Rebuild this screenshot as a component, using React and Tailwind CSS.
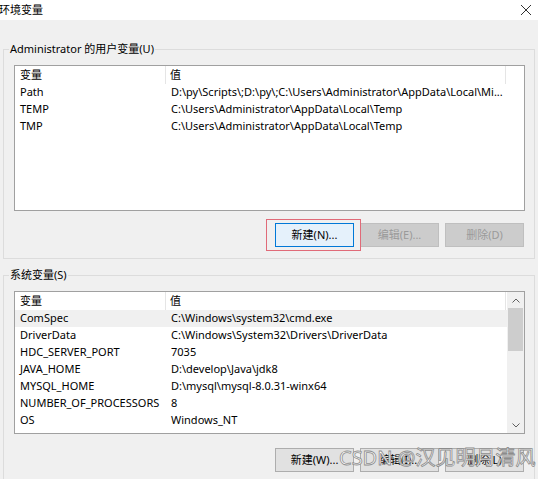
import React from "react";

const userVars = [
  ["Path", "D:\\py\\Scripts\\;D:\\py\\;C:\\Users\\Administrator\\AppData\\Local\\Mi..."],
  ["TEMP", "C:\\Users\\Administrator\\AppData\\Local\\Temp"],
  ["TMP", "C:\\Users\\Administrator\\AppData\\Local\\Temp"],
];

const sysVars = [
  ["ComSpec", "C:\\Windows\\system32\\cmd.exe"],
  ["DriverData", "C:\\Windows\\System32\\Drivers\\DriverData"],
  ["HDC_SERVER_PORT", "7035"],
  ["JAVA_HOME", "D:\\develop\\Java\\jdk8"],
  ["MYSQL_HOME", "D:\\mysql\\mysql-8.0.31-winx64"],
  ["NUMBER_OF_PROCESSORS", "8"],
  ["OS", "Windows_NT"],
  ["Path", "C:\\Program Files\\Common Files\\Oracle\\Java\\javapath;C:\\P..."],
];

function Header() {
  return (
    <div className="flex h-[18px] items-center shrink-0">
      <div className="w-[151px] pl-[5px] border-r border-[#e5e5e5] h-full flex items-center">变量</div>
      <div className="w-[340px] pl-[4px] border-r border-[#e5e5e5] h-full flex items-center">值</div>
    </div>
  );
}

function Row({ name, value, selected }) {
  return (
    <div className={"flex h-[17px] items-center shrink-0 whitespace-nowrap " + (selected ? "bg-[#f0f0f0]" : "")}>
      <div className="w-[152px] pl-[5px]">{name}</div>
      <div className="pl-[4px]">{value}</div>
    </div>
  );
}

function Btn({ children, disabled, primary }) {
  let cls = "w-[79px] h-[24px] flex items-center justify-center border ";
  if (disabled) cls += "bg-[#cccccc] border-[#bfbfbf] text-[#9a9a9a]";
  else if (primary) cls += "bg-[#e5f1fb] border-[#0078d7]";
  else cls += "bg-[#e1e1e1] border-[#adadad]";
  return <div className={cls}>{children}</div>;
}

export default function App() {
  return (
    <div
      className="w-[538px] h-[479px] bg-[#f0f0f0] overflow-hidden text-[11px] text-black relative"
      style={{ fontFamily: '"Noto Sans", "Noto Sans CJK SC", sans-serif' }}
    >
      <div className="h-[20px] bg-white flex items-center justify-between">
        <span className="-ml-[1px]">环境变量</span>
        <svg width="12" height="12" viewBox="0 0 12 12" className="mr-[6px]">
          <path d="M1 1 L11 11 M11 1 L1 11" stroke="#333" strokeWidth="1" />
        </svg>
      </div>

      <fieldset className="ml-[3px] mt-[22px] w-[532px] border border-[#dcdcdc]">
        <legend className="ml-[5px] px-[1px] leading-[14px]">Administrator 的用户变量(U)</legend>
        <div className="pl-[10px] pb-[11px]">
          <div className="mt-[9px] w-[511px] h-[146px] bg-white border border-[#a0a0a0] flex flex-col">
            <Header />
            {userVars.map(([n, v]) => (
              <Row key={n} name={n} value={v} />
            ))}
          </div>
          <div className="mt-[12px] flex justify-end gap-[6px] pr-[10px]">
            <div className="relative">
              <Btn primary>新建(N)...</Btn>
              <div className="absolute -left-[9px] -top-[4px] -right-[7px] -bottom-[4px] border-[1.5px] border-[#e06a78]"></div>
            </div>
            <Btn disabled>编辑(E)...</Btn>
            <Btn disabled>删除(D)</Btn>
          </div>
        </div>
      </fieldset>

      <fieldset className="ml-[3px] mt-[9px] w-[532px] h-[300px] border border-[#dcdcdc]">
        <legend className="ml-[5px] px-[1px] leading-[14px]">系统变量(S)</legend>
        <div className="pl-[10px]">
          <div className="mt-[9px] w-[511px] h-[143px] bg-white border border-[#a0a0a0] flex overflow-hidden">
            <div className="flex-1 flex flex-col overflow-hidden">
              <Header />
              {sysVars.map(([n, v], i) => (
                <Row key={n + i} name={n} value={v} selected={i === 0} />
              ))}
            </div>
            <div className="w-[17px] bg-[#f0f0f0] flex flex-col items-center shrink-0">
              <div className="h-[16px] flex items-center justify-center">
                <svg width="8" height="5" viewBox="0 0 8 5">
                  <path d="M0.5 4.5 L4 1 L7.5 4.5" stroke="#606060" strokeWidth="1" fill="none" />
                </svg>
              </div>
              <div className="w-[15px] h-[43px] bg-[#cdcdcd]"></div>
              <div className="flex-1"></div>
              <div className="h-[16px] flex items-center justify-center">
                <svg width="8" height="5" viewBox="0 0 8 5">
                  <path d="M0.5 0.5 L4 4 L7.5 0.5" stroke="#606060" strokeWidth="1" fill="none" />
                </svg>
              </div>
            </div>
          </div>
          <div className="mt-[14px] flex justify-end gap-[6px] pr-[10px]">
            <Btn>新建(W)...</Btn>
            <Btn>编辑(I)...</Btn>
            <Btn>删除(L)</Btn>
          </div>
        </div>
      </fieldset>

      <div
        className="absolute left-[339px] top-[447px] text-[20px] leading-[22px] text-white whitespace-nowrap [-webkit-text-stroke:0.8px_#8c8c8c]"
        style={{ fontFamily: '"Noto Sans", "Noto Sans CJK SC", sans-serif' }}
      >
        CSDN @汉见明月清风
      </div>
    </div>
  );
}
